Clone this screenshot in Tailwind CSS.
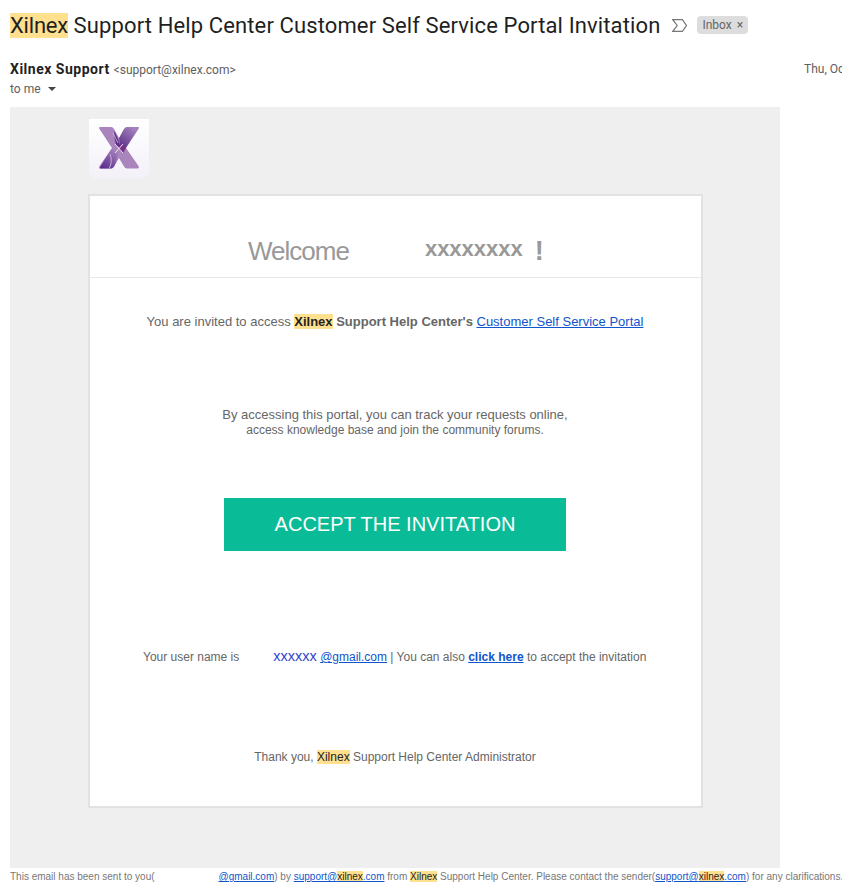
<!DOCTYPE html>
<html lang="en">
<head>
  <meta charset="UTF-8" />
  <title>Xilnex Support Help Center Customer Self Service Portal Invitation</title>
  <script src="https://cdn.jsdelivr.net/npm/@tailwindcss/browser@4"></script>
</head>
<body class="bg-white w-[842px] h-[888px] overflow-hidden font-['Liberation_Sans',sans-serif]">

  <!-- Subject -->
  <div class="flex items-center h-[50px] pl-[10px]">
    <h1 class="font-['Roboto',sans-serif] text-[22px] leading-[27px] font-normal text-[#1f1f1f] tracking-[0.12px] whitespace-nowrap"><span class="bg-[#ffe08f] tracking-[-0.2px]">Xilnex</span> Support Help Center Customer Self Service Portal Invitation</h1>
    <svg class="ml-[12px] w-[15px] h-[13px]" viewBox="0 0 15 13" fill="none" stroke="#777" stroke-width="1.2"><path d="M.8.7h9.6l4 5.800-4 5.800H.8l4.400-5.800z"/></svg>
    <span class="ml-[10px] flex items-center h-[18px] px-[5px] rounded-[4px] bg-[#dddddd] text-[#666] text-[12px] font-['Roboto',sans-serif]">Inbox<span class="ml-[5px] text-[12px] leading-none">×</span></span>
  </div>

  <!-- Sender -->
  <div class="flex justify-between h-[57px] pt-[10px] pl-[10px]">
    <div>
      <div class="font-['Roboto',sans-serif] leading-[18px] whitespace-nowrap"><span class="text-[14px] font-bold tracking-[0.5px] text-[#1f1f1f]">Xilnex Support</span> <span class="text-[12px] text-[#5e5e5e]">&lt;support@xilnex.com&gt;</span></div>
      <div class="flex items-center mt-[2px] font-['Roboto',sans-serif] text-[12px] leading-[16px] text-[#5e5e5e]">to me
        <span class="ml-[7px] w-0 h-0 border-x-[4px] border-x-transparent border-t-[4px] border-t-[#444]"></span>
      </div>
    </div>
    <div class="w-[38px] overflow-hidden whitespace-nowrap font-['Roboto',sans-serif] text-[12px] leading-[18px] text-[#5e5e5e]">Thu, Oct 1</div>
  </div>

  <!-- Message body -->
  <div class="ml-[10px] w-[770px] h-[761px] bg-[#efefef] pt-[12px] pl-[78px]">
    <div class="ml-[1px] w-[60px] h-[60px] pt-[8px] rounded-b-[8px] bg-gradient-to-b from-white to-[#f3f0f8] flex justify-center items-start">
      <svg class="w-[40px] h-[42px]" viewBox="0 0 40 42">
        <defs>
          <clipPath id="xshape">
            <path d="M1 0H12Q14 0 15 2L20 11 25 2Q26 0 28 0H39Q40.500 0 39.500 2L27 21 39.500 39Q40.500 41.500 38.500 41.500H28Q26 41.500 25 39.500L20 31 15 39.500Q14 41.500 12 41.500H1.500Q-.5 41.500.5 39L13 21 .5 2Q-.5 0 1 0Z"/>
          </clipPath>
          <linearGradient id="armTop" gradientUnits="userSpaceOnUse" x1="20" y1="24" x2="36" y2="2">
            <stop offset="0" stop-color="#4f2380"/>
            <stop offset="1" stop-color="#a582bc"/>
          </linearGradient>
          <linearGradient id="armLow" gradientUnits="userSpaceOnUse" x1="5" y1="42" x2="17" y2="25">
            <stop offset="0" stop-color="#5a2a8c"/>
            <stop offset="1" stop-color="#a17dba"/>
          </linearGradient>
        </defs>
        <g clip-path="url(#xshape)">
          <rect width="40" height="42" fill="#a984bd"/>
          <path d="M20 11L25 2 28 0H40L27 21 22 24Z" fill="url(#armTop)"/>
          <path d="M15 4Q19 10 22 22L17 18Q15 10 15 4Z" fill="#5f2c8c"/>
          <path d="M0 42L13 21 19 27 15 42Z" fill="url(#armLow)"/>
          <path d="M22 16L27 21 24 26 20 22Z" fill="#7b2d8a"/>
          <path d="M10 42Q14 34 11 27" fill="none" stroke="#d9c9e3" stroke-width="0.8"/>
          <path d="M14 6Q17 12 19 16" fill="none" stroke="#d9c9e3" stroke-width="0.8"/>
        </g>
        <path d="M16 17l8 9M24 17l-8 9" stroke="#e8e4ec" stroke-width="1"/>
      </svg>
    </div>

    <div class="mt-[15px] w-[615px] h-[614px] pr-[1px] bg-white border-2 border-[#e2e2e2] text-[#666] text-[13px]">
      <div class="flex items-center h-[82px] -mr-[1px] border-b border-[#e8e8e8] pt-[30px] pl-[158px] text-[#999]">
        <span class="text-[26px] tracking-[-1px]">Welcome</span>
        <span class="ml-[76px] mb-[6px] text-[22px] font-bold">xxxxxxxx</span>
        <span class="ml-[12px] text-[27px] font-bold">!</span>
      </div>

      <p class="mt-[36px] text-center leading-[16px]">You are invited to access <b><span class="bg-[#ffe08f] text-[#222]">Xilnex</span> Support Help Center's</b> <a href="#" class="text-[#1155cc] underline">Customer Self Service Portal</a></p>

      <div class="mt-[77px] text-center leading-[15px]">
        <p>By accessing this portal, you can track your requests online,</p>
        <p class="mt-[1px] text-[12px]">access knowledge base and join the community forums.</p>
      </div>

      <a href="#" class="block mt-[60px] mx-auto w-[342px] h-[53px] bg-[#0abb97] text-white text-[20px] leading-[52px] text-center">ACCEPT THE INVITATION</a>

      <p class="mt-[97px] pl-[53px] text-[12px] leading-[16px] whitespace-nowrap">Your user name is<span class="ml-[34px] text-[14.5px] text-[#3344cc]">xxxxxx</span> <a href="#" class="text-[#1155cc] underline">@gmail.com</a> | You can also <a href="#" class="text-[#1155cc] underline font-bold">click here</a> to accept the invitation</p>

      <p class="mt-[84px] text-center text-[12px] leading-[16px]">Thank you, <span class="bg-[#ffe08f] text-[#222]">Xilnex</span> Support Help Center Administrator</p>
    </div>
  </div>

  <!-- Footer -->
  <p class="pl-[10px] mt-[2px] text-[10px] leading-[14px] text-[#777] whitespace-nowrap">This email has been sent to you(<a href="#" class="ml-[64px] text-[#1155cc] underline">@gmail.com</a>) by <a href="#" class="text-[#1155cc] underline">support@<span class="bg-[#ffe08f] text-[#222]">xilnex</span>.com</a> from <span class="bg-[#ffe08f] text-[#222]">Xilnex</span> Support Help Center. Please contact the sender(<a href="#" class="text-[#1155cc] underline">support@<span class="bg-[#ffe08f] text-[#222]">xilnex</span>.com</a>) for any clarifications.</p>

</body>
</html>
